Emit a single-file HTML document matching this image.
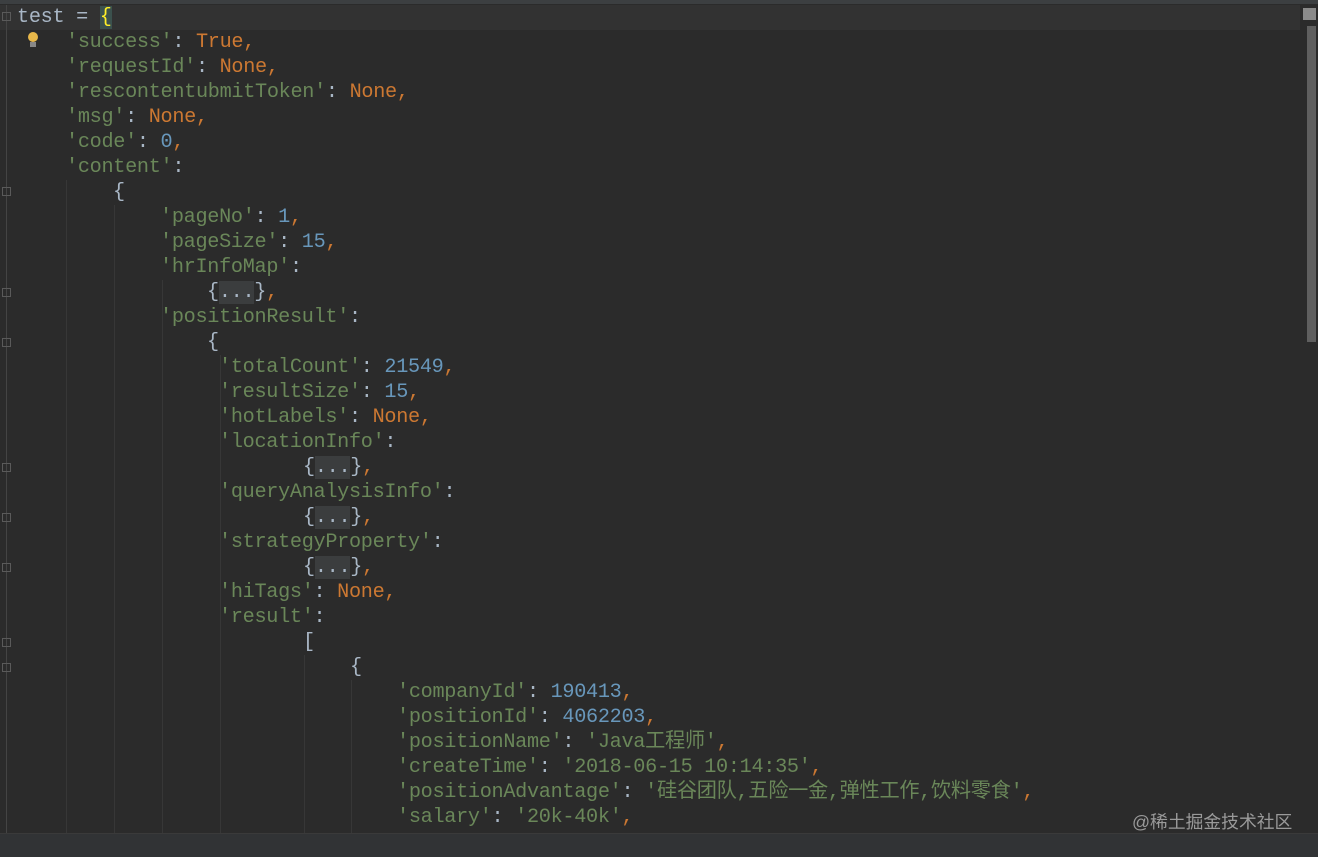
<!DOCTYPE html>
<html><head><meta charset="utf-8"><style>
html,body{margin:0;padding:0}
body{width:1318px;height:856px;background:#2b2b2b;position:relative;overflow:hidden;font-family:"Liberation Mono","Noto Sans CJK SC",monospace;font-size:20.2px;letter-spacing:-0.3px;color:#a9b7c6}
.top{position:absolute;left:0;top:0;width:1318px;height:4px;background:#3c3f41}
.cur{position:absolute;left:0;top:5px;width:1300px;height:25px;background:#323232}
.bot{position:absolute;left:0;top:833px;width:1318px;height:23px;background:#313335;border-top:1px solid #3a3a3a}
.g{position:absolute;top:5px;height:828px;width:1px;background:#373737}
.l{position:absolute;white-space:pre;height:25px;line-height:25px}
.k{color:#6a8759}.o{color:#cc7832}.n{color:#6897bb}
.f{background:#3b3d3e;color:#a9b7c6}
.fm{position:absolute;left:2px;width:9px;height:9px;border:1px solid #5a5a5a;box-sizing:border-box}
.sb{position:absolute;left:1307px;top:26px;width:9px;height:316px;background:#5f5f5f}
.sq{position:absolute;left:1303px;top:8px;width:13px;height:12px;background:#8a8a8a}
.wm{position:absolute;left:1132px;top:808px;font-family:"Liberation Sans","Noto Sans CJK SC",sans-serif;font-size:17.8px;letter-spacing:0;color:#9a9a9a}
</style></head><body>
<div class="top"></div>
<div class="cur"></div>
<div class="g" style="left:6px;background:#444"></div>
<div class="g" style="left:66px;top:180px;height:653px"></div>
<div class="g" style="left:114px;top:205px;height:628px"></div>
<div class="g" style="left:162px;top:280px;height:553px"></div>
<div class="g" style="left:220px;top:355px;height:478px"></div>
<div class="g" style="left:304px;top:655px;height:178px"></div>
<div class="g" style="left:351px;top:680px;height:153px"></div>
<div class="fm" style="top:12px"></div>
<div class="fm" style="top:187px"></div>
<div class="fm" style="top:288px"></div>
<div class="fm" style="top:338px"></div>
<div class="fm" style="top:463px"></div>
<div class="fm" style="top:513px"></div>
<div class="fm" style="top:563px"></div>
<div class="fm" style="top:638px"></div>
<div class="fm" style="top:663px"></div>
<div style="position:absolute;left:28px;top:32px;width:10px;height:10px;border-radius:50%;background:#e8b84a"></div>
<div style="position:absolute;left:30px;top:42px;width:6px;height:5px;background:#888"></div>

<div class="l" style="left:17px;top:5px">test = <span style="color:#ffef28;background:#3b514d">{</span></div>
<div class="l" style="left:66px;top:30px"><span class="k">'success'</span>: <span class="o">True,</span></div>
<div class="l" style="left:66px;top:55px"><span class="k">'requestId'</span>: <span class="o">None,</span></div>
<div class="l" style="left:66px;top:80px"><span class="k">'rescontentubmitToken'</span>: <span class="o">None,</span></div>
<div class="l" style="left:66px;top:105px"><span class="k">'msg'</span>: <span class="o">None,</span></div>
<div class="l" style="left:66px;top:130px"><span class="k">'code'</span>: <span class="n">0</span><span class="o">,</span></div>
<div class="l" style="left:66px;top:155px"><span class="k">'content'</span>:</div>
<div class="l" style="left:113px;top:180px">{</div>
<div class="l" style="left:160px;top:205px"><span class="k">'pageNo'</span>: <span class="n">1</span><span class="o">,</span></div>
<div class="l" style="left:160px;top:230px"><span class="k">'pageSize'</span>: <span class="n">15</span><span class="o">,</span></div>
<div class="l" style="left:160px;top:255px"><span class="k">'hrInfoMap'</span>:</div>
<div class="l" style="left:207px;top:280px">{<span class="f">...</span>}<span class="o">,</span></div>
<div class="l" style="left:160px;top:305px"><span class="k">'positionResult'</span>:</div>
<div class="l" style="left:207px;top:330px">{</div>
<div class="l" style="left:219px;top:355px"><span class="k">'totalCount'</span>: <span class="n">21549</span><span class="o">,</span></div>
<div class="l" style="left:219px;top:380px"><span class="k">'resultSize'</span>: <span class="n">15</span><span class="o">,</span></div>
<div class="l" style="left:219px;top:405px"><span class="k">'hotLabels'</span>: <span class="o">None,</span></div>
<div class="l" style="left:219px;top:430px"><span class="k">'locationInfo'</span>:</div>
<div class="l" style="left:303px;top:455px">{<span class="f">...</span>}<span class="o">,</span></div>
<div class="l" style="left:219px;top:480px"><span class="k">'queryAnalysisInfo'</span>:</div>
<div class="l" style="left:303px;top:505px">{<span class="f">...</span>}<span class="o">,</span></div>
<div class="l" style="left:219px;top:530px"><span class="k">'strategyProperty'</span>:</div>
<div class="l" style="left:303px;top:555px">{<span class="f">...</span>}<span class="o">,</span></div>
<div class="l" style="left:219px;top:580px"><span class="k">'hiTags'</span>: <span class="o">None,</span></div>
<div class="l" style="left:219px;top:605px"><span class="k">'result'</span>:</div>
<div class="l" style="left:303px;top:630px">[</div>
<div class="l" style="left:350px;top:655px">{</div>
<div class="l" style="left:397px;top:680px"><span class="k">'companyId'</span>: <span class="n">190413</span><span class="o">,</span></div>
<div class="l" style="left:397px;top:705px"><span class="k">'positionId'</span>: <span class="n">4062203</span><span class="o">,</span></div>
<div class="l" style="left:397px;top:730px"><span class="k">'positionName'</span>: <span class="k">'Java工程师'</span><span class="o">,</span></div>
<div class="l" style="left:397px;top:755px"><span class="k">'createTime'</span>: <span class="k">'2018-06-15 10:14:35'</span><span class="o">,</span></div>
<div class="l" style="left:397px;top:780px"><span class="k">'positionAdvantage'</span>: <span class="k">'硅谷团队,五险一金,弹性工作,饮料零食'</span><span class="o">,</span></div>
<div class="l" style="left:397px;top:805px"><span class="k">'salary'</span>: <span class="k">'20k-40k'</span><span class="o">,</span></div>
<div class="bot"></div>
<div class="sq"></div>
<div class="sb"></div>
<div class="wm">@稀土掘金技术社区</div>
</body></html>
